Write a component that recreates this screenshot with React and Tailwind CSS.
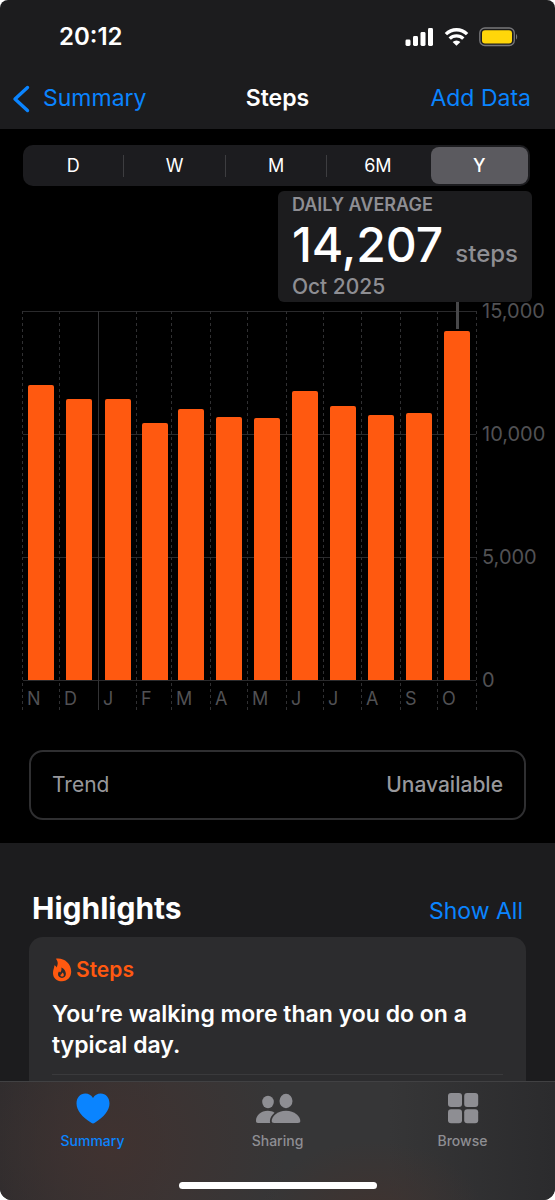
import { useState } from "react";

const ranges = ["D", "W", "M", "6M", "Y"];

const months = [
  { label: "N", line: 23, bar: 28, top: 385 },
  { label: "D", line: 60, bar: 66, top: 399 },
  { label: "J", line: 99, bar: 105, top: 399, yearStart: true },
  { label: "F", line: 137, bar: 142, top: 423 },
  { label: "M", line: 172, bar: 178, top: 409 },
  { label: "A", line: 211, bar: 216, top: 417 },
  { label: "M", line: 248, bar: 254, top: 418 },
  { label: "J", line: 287, bar: 292, top: 391 },
  { label: "J", line: 324, bar: 330, top: 406 },
  { label: "A", line: 362, bar: 368, top: 415 },
  { label: "S", line: 401, bar: 406, top: 413 },
  { label: "O", line: 438, bar: 444, top: 331 },
];

const gridLines = [
  { label: "15,000", y: 311 },
  { label: "10,000", y: 434 },
  { label: "5,000", y: 557 },
  { label: "0", y: 680 },
];

function StatusBar() {
  return (
    <div className="flex h-[74px] items-center justify-between pl-[59px] pr-[37px]">
      <span className="text-[24px] font-semibold">20:12</span>
      <div className="flex items-center gap-[10px]">
        <svg className="h-[18px] w-[29px]" viewBox="0 0 29 18" fill="white" aria-hidden="true">
          <rect x="0.5" y="11.5" width="5" height="6.5" rx="1.4" />
          <rect x="8" y="8" width="5" height="10" rx="1.4" />
          <rect x="15.5" y="4" width="5" height="14" rx="1.4" />
          <rect x="23" y="0" width="5" height="18" rx="1.4" />
        </svg>
        <svg className="h-[18px] w-[25px]" viewBox="0 0 25 18" aria-hidden="true">
          <g fill="none" stroke="white" strokeWidth="3.4">
            <path d="M1.900 6.100a15.200 15.200 0 0 1 21.200 0" />
            <path d="M5.700 10.600a9.800 9.800 0 0 1 13.600 0" />
          </g>
          <path d="M8.600 13.900a5.800 5.800 0 0 1 7.800 0L12.500 17.800z" fill="white" />
        </svg>
        <svg className="h-5 w-[39px]" viewBox="0 0 39 20" aria-hidden="true">
          <rect x="0.8" y="1" width="34.5" height="17.5" rx="5" fill="none" stroke="#77777a" strokeWidth="1.3" />
          <rect x="3" y="3.2" width="30" height="13.2" rx="3" fill="#ffd60a" />
          <path d="M37 7v5.600c1.600-.7 1.600-4.900 0-5.600z" fill="#77777a" />
        </svg>
      </div>
    </div>
  );
}

function StepsChart() {
  return (
    <svg
      className="block h-auto w-full overflow-visible"
      viewBox="0 302 555 410"
      role="img"
      aria-label="Daily average steps per month"
      fontSize="18"
      fill="#515154"
    >
      {gridLines.map((line) => (
        <g key={line.label}>
          <path d={`M23 ${line.y + 0.5}H476`} stroke="#2a2a2c" />
          <text x="482" y={line.y + 7} fontSize="20">
            {line.label}
          </text>
        </g>
      ))}
      {months.map((month) => (
        <g key={month.line}>
          <path
            d={`M${month.line - 0.5} 311V710`}
            stroke={month.yearStart ? "#333335" : "#303032"}
            strokeDasharray={month.yearStart ? undefined : "3 3"}
          />
          <path
            d={`M${month.bar} 680V${month.top + 2}q0 -2 2 -2h22q2 0 2 2V680z`}
            fill="#ff5910"
          />
          <text x={month.line + 4} y="705">
            {month.label}
          </text>
        </g>
      ))}
      <path d="M476.500 311V710" stroke="#303032" strokeDasharray="3 3" />
      {/* Selection marker, ties the October bar to the callout */}
      <path d="M457.500 302V329" stroke="#48484a" strokeWidth="3" />
    </svg>
  );
}

function Tab({ label, active, children }) {
  return (
    <a
      href="#"
      aria-current={active ? "page" : undefined}
      className={`flex flex-1 flex-col items-center gap-[7px] text-sm font-medium ${
        active ? "text-[#0a84ff]" : "text-[#8e8e93]"
      }`}
    >
      {children}
      <span>{label}</span>
    </a>
  );
}

export default function App() {
  const [range, setRange] = useState("Y");

  return (
    <div className="flex h-screen flex-col overflow-hidden rounded-t-lg rounded-b-xl bg-[#1c1c1e] font-['Inter',sans-serif] text-white">
      <header>
        <StatusBar />
        <nav className="grid h-[55px] grid-cols-3 items-center pl-3 pr-6 pb-[6px] text-[23px]">
          <a href="#" className="flex items-center gap-[13px] text-[#0a84ff]">
            <svg className="h-7 w-[18px]" viewBox="0 0 18 28" fill="none" stroke="currentColor" strokeWidth="3.4" strokeLinecap="round" strokeLinejoin="round" aria-hidden="true">
              <path d="M15.500 2.500L3 14l12.500 11.500" />
            </svg>
            Summary
          </a>
          <h1 className="pl-3 text-center font-semibold">Steps</h1>
          <button className="justify-self-end whitespace-nowrap text-[#0a84ff]">Add Data</button>
        </nav>
      </header>

      <main className="min-h-0 flex-1 overflow-hidden">
        <section className="bg-black pt-4 pb-[23px]">
          {/* Range picker */}
          <div className="mr-[25px] ml-[23px] flex h-[41px] items-center rounded-[10px] bg-[#1c1c1f]">
            {ranges.map((item, index) => (
              <div key={item} className="flex h-full flex-1 items-center">
                <button
                  onClick={() => setRange(item)}
                  aria-pressed={range === item}
                  className={`h-[37px] flex-1 rounded-lg text-lg ${
                    range === item ? "mx-[2px] bg-[#5b5a5f] font-medium" : ""
                  }`}
                >
                  {item}
                </button>
                {index < 3 && <span className="h-[22px] w-px bg-[#3d3d40]" />}
              </div>
            ))}
          </div>

          {/* Selected month */}
          <div className="mt-[5px] mr-[23px] ml-auto h-[111px] w-fit rounded-md bg-[#1c1c1e] px-[14px] pt-[3px] font-medium text-[#8e8e93]">
            <p className="text-lg leading-[22px] font-semibold">DAILY AVERAGE</p>
            <p className="flex h-[58px] items-baseline gap-3">
              <span className="text-5xl leading-[58px] text-white">14,207</span>
              <span className="text-2xl leading-7">steps</span>
            </p>
            <p className="text-[21px] leading-[26px]">Oct 2025</p>
          </div>

          <StepsChart />

          <div className="mx-[29px] mt-[38px] flex h-[70px] items-center justify-between rounded-[14px] border-2 border-[#2f2f31] px-[21px] text-[21px] text-[#98989c]">
            <span>Trend</span>
            <span className="font-medium">Unavailable</span>
          </div>
        </section>

        <section className="px-[29px] pt-[45px]">
          <div className="flex items-baseline justify-between px-[3px]">
            <h2 className="text-[30px] leading-10 font-bold">Highlights</h2>
            <a href="#" className="text-[23px] text-[#0a84ff]">Show All</a>
          </div>

          <article className="mt-2 h-[180px] rounded-[14px] bg-[#2c2c2e] px-[23px] pt-[18px]">
            <h3 className="flex items-center gap-1 text-[21px] leading-[30px] font-semibold text-[#ff5910]">
              <svg className="h-6 w-5" viewBox="0 0 20 24" aria-hidden="true">
                <path
                  d="M3.800.7C11.500-.6 19.200 5 19.200 13.600c0 5.600-3.600 9.700-9.200 9.700-5.400 0-9-3.500-9-8.400 0-3.200 1.300-4.900 1.400-7.700 1 .4 1.700 1.200 2.100 2.200C6.300 6.200 6.200 3.200 3.800.7z"
                  fill="currentColor"
                />
                <path
                  d="M9.300 9.500c2.700 1.200 4.600 3.700 4.600 6.300 0 2.500-1.600 4.100-3.900 4.100-2.400 0-4-1.500-4-3.600 0-1.200.5-2.100 1-2.900.5.300.8.700 1.100 1.200 1.300-1.300 1.700-3.100 1.200-5.100z"
                  fill="#2c2c2e"
                />
                <path d="M10.300 14.600c1 .8 1.500 1.400 1.500 2.300 0 1-.7 1.700-1.700 1.700s-1.700-.7-1.700-1.600c.8-.4 1.600-1.200 1.900-2.400z" fill="currentColor" />
              </svg>
              Steps
            </h3>
            <p className="mt-[14px] border-b border-[#3a3a3c] pb-[13px] text-[23px] leading-[31px] font-semibold">
              You’re walking more than you do on a typical day.
            </p>
          </article>
        </section>
      </main>

      <footer className="border-t border-[#414143] bg-[radial-gradient(32%_140%_at_20%_55%,#403230_0%,transparent_100%),radial-gradient(20%_60%_at_67%_110%,#3f3330_0%,transparent_100%),linear-gradient(90deg,#2b2b2d_0%,#363637_30%,#363637_70%,#2b2b2d_100%)] pt-[10px] pb-[11px]">
        <nav className="flex">
          <Tab label="Summary" active>
            <svg className="h-8 w-[34px]" viewBox="0 0 34 32" fill="currentColor" aria-hidden="true">
              <path d="M17 31.500c-.6 0-1.200-.3-1.800-.7C6 25 .5 18.500.5 11.300.5 5.500 4.300 1.500 9.300 1.500c3.300 0 6.100 1.600 7.700 4.500 1.600-2.900 4.400-4.500 7.700-4.500 5 0 8.800 4 8.800 9.800 0 7.200-5.500 13.700-14.700 19.500-.6.4-1.200.7-1.800.7z" />
            </svg>
          </Tab>
          <Tab label="Sharing">
            <svg className="h-8 w-[46px]" viewBox="0 0 46 32" fill="currentColor" aria-hidden="true">
              <ellipse cx="13" cy="10" rx="5.800" ry="6.200" />
              <path d="M3 31c-1.500 0-2-.8-2-2.200C1 23.700 6 18.800 12.800 18.800c2.600 0 4.900.7 6.700 1.900-2.900 2.500-4.600 5.500-4.600 8.500 0 .7.100 1.300.4 1.800z" />
              <ellipse cx="31" cy="9" rx="6.500" ry="7.200" />
              <path d="M19.200 31c-1.800 0-2.500-.7-2.500-2 0-4.400 5.600-10.300 14.300-10.300S45.300 24.600 45.300 29c0 1.300-.7 2-2.500 2z" />
            </svg>
          </Tab>
          <Tab label="Browse">
            <svg className="h-8 w-8" viewBox="0 0 32 32" fill="currentColor" aria-hidden="true">
              <rect x="1" y="1" width="14" height="14" rx="3" />
              <rect x="17.200" y="1" width="14" height="14" rx="3" />
              <rect x="1" y="17.200" width="14" height="14" rx="3" />
              <rect x="17.200" y="17.200" width="14" height="14" rx="3" />
            </svg>
          </Tab>
        </nav>
        <div className="mx-auto mt-[31px] h-[7px] w-[198px] rounded-full bg-white" />
      </footer>
    </div>
  );
}
